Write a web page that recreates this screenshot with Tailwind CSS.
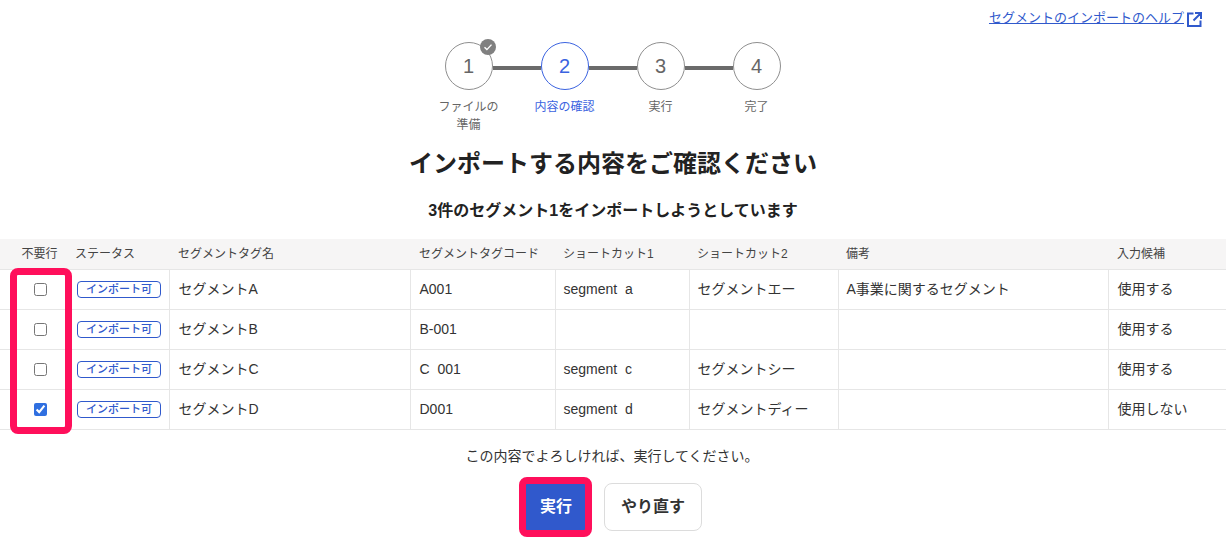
<!DOCTYPE html>
<html lang="ja"><head><meta charset="utf-8"><script src="https://cdn.jsdelivr.net/npm/@tailwindcss/browser@4"></script></head>
<body class="bg-white text-[#333] font-['Liberation_Sans','Noto_Sans_CJK_JP',sans-serif] overflow-hidden">
<div class="relative w-[1226px] h-[543px] overflow-hidden">
  <div class="flex justify-end items-center h-[36px] pr-[24px] text-[13px] text-[#3059cc]">
    <a class="underline">セグメントのインポートのヘルプ</a>
    <svg class="ml-[3px] mt-[3px]" width="15" height="15" viewBox="0 0 15 15" fill="none" stroke="#3059cc" stroke-width="2"><path d="M6.5 1.5H1v12.5h12.5V8.5M8 1h6v6M14 1L6.5 8.5"/></svg>
  </div>
  <div class="flex justify-center h-[100px] mt-[6px] ml-[-1px]">
    <div class="relative w-[96px] flex flex-col items-center">
      <div class="w-[48px] h-[48px] rounded-full border border-[#8f8f8f] flex items-center justify-center text-[20px] text-[#666] bg-white z-10">1</div>
      <div class="absolute left-[72px] top-[24px] w-[48px] h-[4px] bg-[#6b6b6b]"></div>
      <div class="absolute left-[59px] top-[-3px] w-[16px] h-[16px] rounded-full bg-[#808080] z-20 flex items-center justify-center"><svg width="10" height="10" viewBox="0 0 10 10" fill="none" stroke="#fff" stroke-width="1.4"><path d="M1.5 5.2l2.4 2.4 4.6-5"/></svg></div>
      <div class="mt-[8px] text-[12px] leading-[18px] text-[#666] text-center w-[70px]">ファイルの<br>準備</div>
    </div>
    <div class="relative w-[96px] flex flex-col items-center">
      <div class="w-[48px] h-[48px] rounded-full border border-[#3b63e0] flex items-center justify-center text-[20px] text-[#3b63e0] bg-white z-10">2</div>
      <div class="absolute left-[72px] top-[24px] w-[48px] h-[4px] bg-[#6b6b6b]"></div>
      <div class="mt-[8px] text-[12px] leading-[18px] text-[#3b63e0] text-center">内容の確認</div>
    </div>
    <div class="relative w-[96px] flex flex-col items-center">
      <div class="w-[48px] h-[48px] rounded-full border border-[#8f8f8f] flex items-center justify-center text-[20px] text-[#666] bg-white z-10">3</div>
      <div class="absolute left-[72px] top-[24px] w-[48px] h-[4px] bg-[#6b6b6b]"></div>
      <div class="mt-[8px] text-[12px] leading-[18px] text-[#666] text-center">実行</div>
    </div>
    <div class="relative w-[96px] flex flex-col items-center">
      <div class="w-[48px] h-[48px] rounded-full border border-[#8f8f8f] flex items-center justify-center text-[20px] text-[#666] bg-white z-10">4</div>
      <div class="mt-[8px] text-[12px] leading-[18px] text-[#666] text-center">完了</div>
    </div>
  </div>
  <h1 class="mt-[6px] text-center text-[24px] leading-[32px] font-bold text-[#222]">インポートする内容をご確認ください</h1>
  <p class="mt-[19px] text-center text-[16px] leading-[24px] font-bold text-[#222]">3件のセグメント1をインポートしようとしています</p>
  <table class="mt-[16px] w-[1226px] table-fixed border-collapse text-[14px] text-[#333]">
    <colgroup><col class="w-[69px]"><col class="w-[100px]"><col class="w-[241px]"><col class="w-[145px]"><col class="w-[134px]"><col class="w-[149px]"><col class="w-[270px]"><col class="w-[118px]"></colgroup>
    <thead class="bg-[#f6f5f5] text-[12px] text-[#444]">
      <tr class="h-[30px] border-b border-[#e6e6e6]">
        <th class="font-normal text-center pl-[10px]">不要行</th><th class="font-normal text-left pl-[6px]">ステータス</th><th class="font-normal text-left pl-[9px]">セグメントタグ名</th><th class="font-normal text-left pl-[9px]">セグメントタグコード</th><th class="font-normal text-left pl-[8px]">ショートカット1</th><th class="font-normal text-left pl-[8px]">ショートカット2</th><th class="font-normal text-left pl-[8px]">備考</th><th class="font-normal text-left pl-[9px]">入力候補</th>
      </tr>
    </thead>
    <tbody>
      <tr class="h-[40px] border-b border-[#e6e6e6]">
        <td class="text-center pl-[11px]"><input type="checkbox" class="align-middle w-[13px] h-[13px]"></td>
        <td class="pl-[8px] border-r border-[#e6e6e6]"><span class="flex items-center justify-center w-[84px] h-[17px] rounded-[4px] border border-[#3059cc] text-[#3059cc] text-[11px] font-medium">インポート可</span></td>
        <td class="pl-[9px] border-r border-[#e6e6e6]">セグメントA</td><td class="pl-[9px] border-r border-[#e6e6e6]">A001</td><td class="pl-[8px] border-r border-[#e6e6e6]">segment<span class="text-transparent">_</span>a</td><td class="pl-[8px] border-r border-[#e6e6e6]">セグメントエー</td><td class="pl-[8px] border-r border-[#e6e6e6]">A事業に関するセグメント</td><td class="pl-[9px]">使用する</td>
      </tr>
      <tr class="h-[40px] border-b border-[#e6e6e6]">
        <td class="text-center pl-[11px]"><input type="checkbox" class="align-middle w-[13px] h-[13px]"></td>
        <td class="pl-[8px] border-r border-[#e6e6e6]"><span class="flex items-center justify-center w-[84px] h-[17px] rounded-[4px] border border-[#3059cc] text-[#3059cc] text-[11px] font-medium">インポート可</span></td>
        <td class="pl-[9px] border-r border-[#e6e6e6]">セグメントB</td><td class="pl-[9px] border-r border-[#e6e6e6]">B-001</td><td class="pl-[8px] border-r border-[#e6e6e6]"></td><td class="pl-[8px] border-r border-[#e6e6e6]"></td><td class="pl-[8px] border-r border-[#e6e6e6]"></td><td class="pl-[9px]">使用する</td>
      </tr>
      <tr class="h-[40px] border-b border-[#e6e6e6]">
        <td class="text-center pl-[11px]"><input type="checkbox" class="align-middle w-[13px] h-[13px]"></td>
        <td class="pl-[8px] border-r border-[#e6e6e6]"><span class="flex items-center justify-center w-[84px] h-[17px] rounded-[4px] border border-[#3059cc] text-[#3059cc] text-[11px] font-medium">インポート可</span></td>
        <td class="pl-[9px] border-r border-[#e6e6e6]">セグメントC</td><td class="pl-[9px] border-r border-[#e6e6e6]">C<span class="text-transparent">_</span>001</td><td class="pl-[8px] border-r border-[#e6e6e6]">segment<span class="text-transparent">_</span>c</td><td class="pl-[8px] border-r border-[#e6e6e6]">セグメントシー</td><td class="pl-[8px] border-r border-[#e6e6e6]"></td><td class="pl-[9px]">使用する</td>
      </tr>
      <tr class="h-[40px] border-b border-[#e6e6e6]">
        <td class="text-center pl-[11px]"><input type="checkbox" checked class="align-middle w-[13px] h-[13px] accent-[#2f6fe0]"></td>
        <td class="pl-[8px] border-r border-[#e6e6e6]"><span class="flex items-center justify-center w-[84px] h-[17px] rounded-[4px] border border-[#3059cc] text-[#3059cc] text-[11px] font-medium">インポート可</span></td>
        <td class="pl-[9px] border-r border-[#e6e6e6]">セグメントD</td><td class="pl-[9px] border-r border-[#e6e6e6]">D001</td><td class="pl-[8px] border-r border-[#e6e6e6]">segment<span class="text-transparent">_</span>d</td><td class="pl-[8px] border-r border-[#e6e6e6]">セグメントディー</td><td class="pl-[8px] border-r border-[#e6e6e6]"></td><td class="pl-[9px]">使用しない</td>
      </tr>
    </tbody>
  </table>
  <p class="mt-[15px] text-center text-[14px] leading-[22px] text-[#333] ml-[-2px]">この内容でよろしければ、実行してください。</p>
  <div class="mt-[16px] flex justify-center gap-[16px]">
    <button class="w-[64px] h-[48px] rounded-[4px] bg-[#3059cc] text-white font-bold text-[16px]">実行</button>
    <button class="w-[98px] h-[48px] rounded-[8px] border border-[#dcdcdc] bg-white text-[#333] font-bold text-[16px]">やり直す</button>
  </div>
  <div class="absolute left-[10px] top-[268px] w-[62px] h-[166px] rounded-[8px] border-[7px] border-[#ff0f5b] pointer-events-none"></div>
  <div class="absolute left-[519px] top-[477px] w-[73px] h-[60px] rounded-[8px] border-[7px] border-[#ff0f5b] pointer-events-none"></div>
</div>
</body></html>
